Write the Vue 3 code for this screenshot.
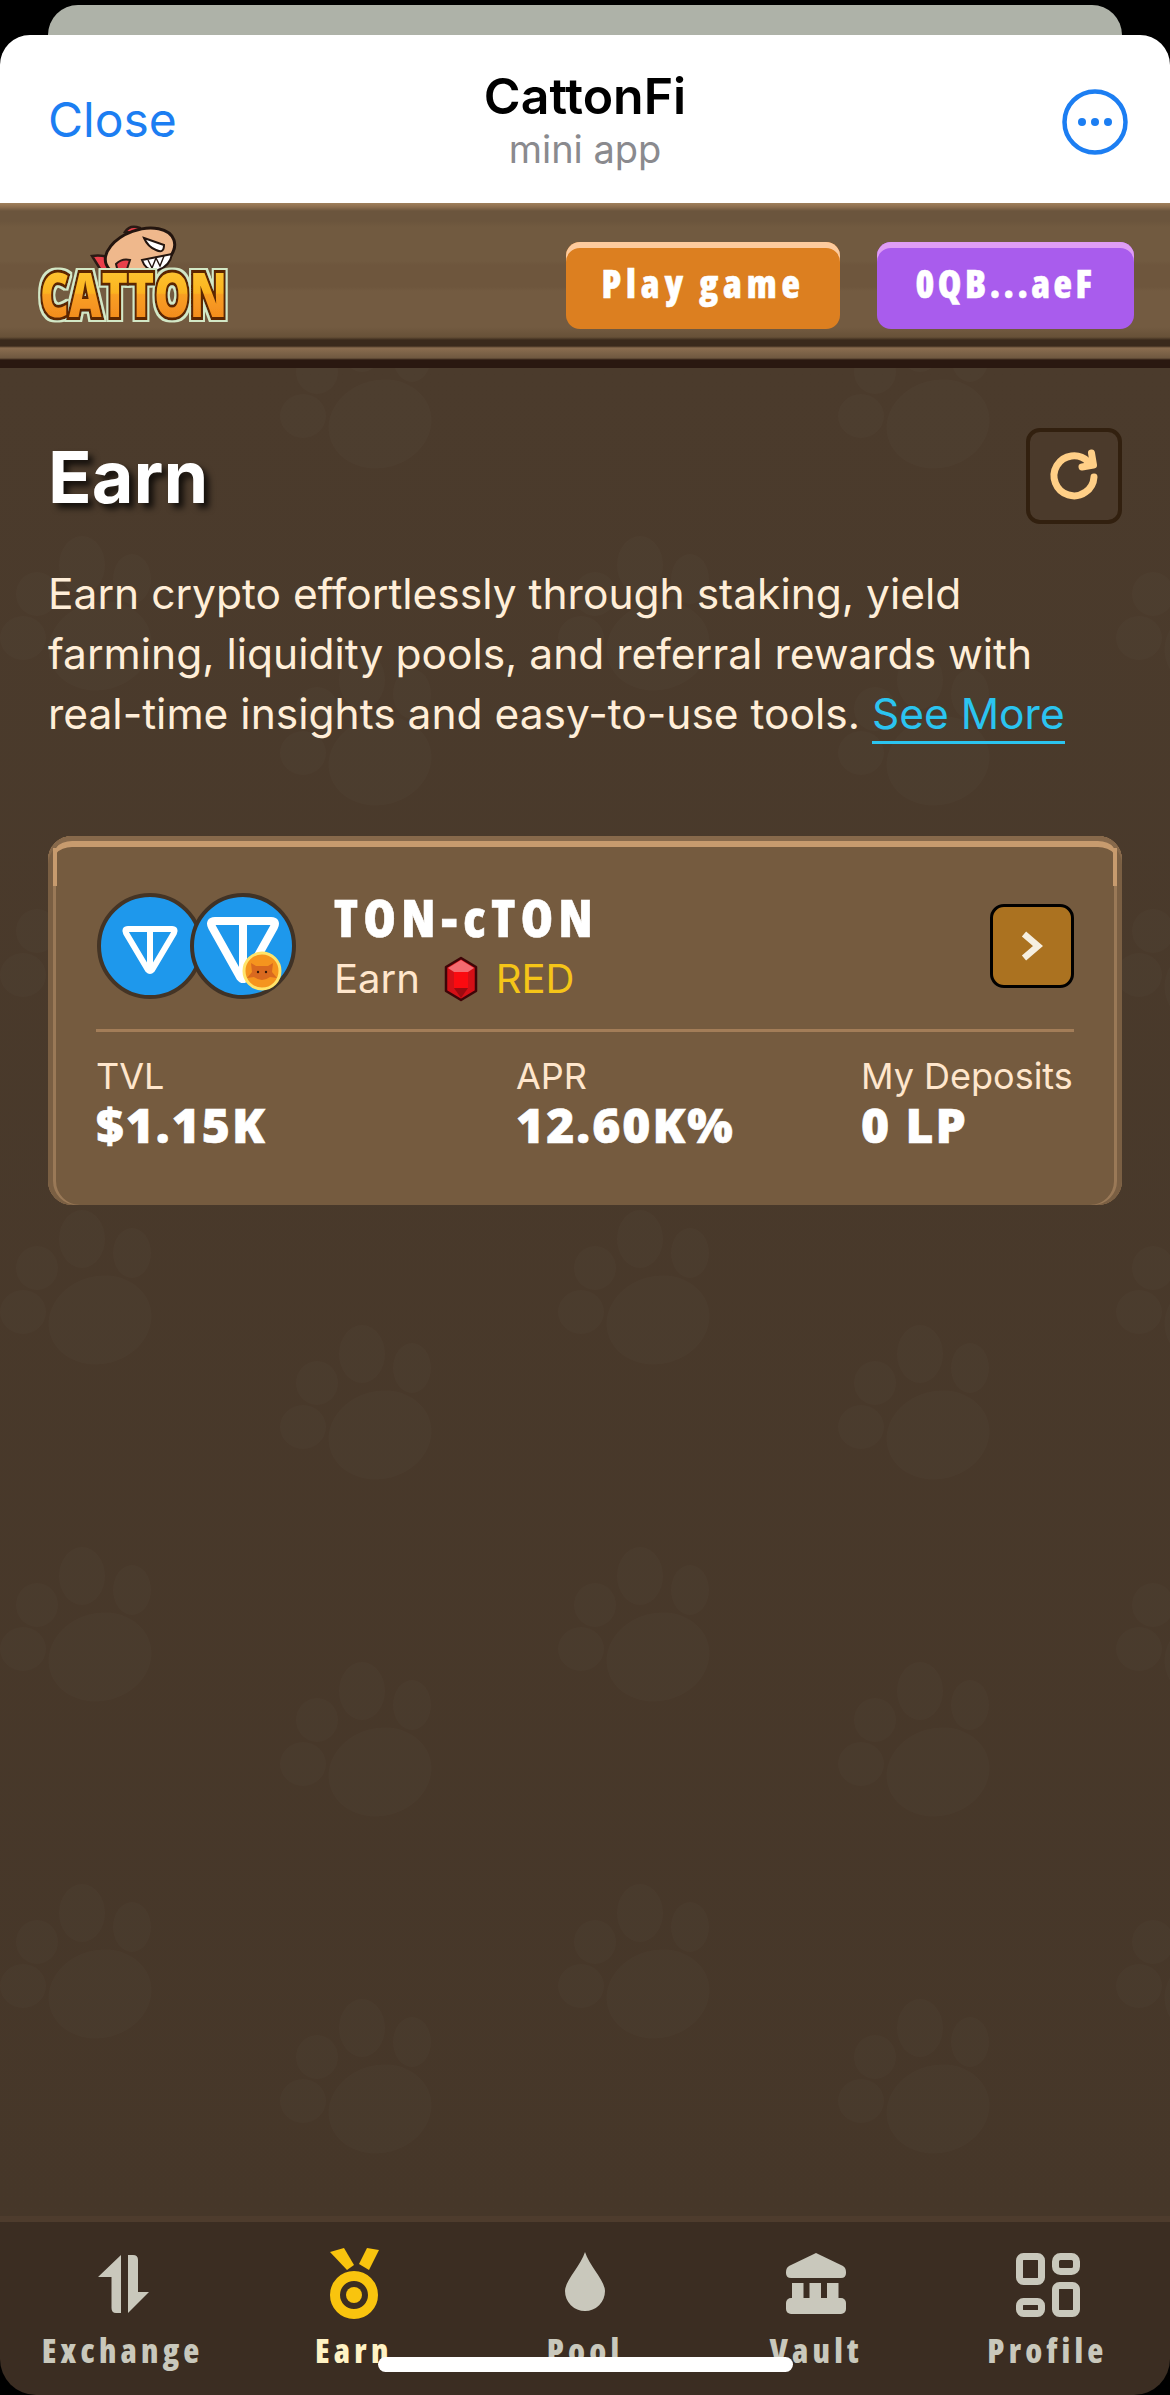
<script setup>
const stats = [
  { label: 'TVL', value: '$1.15K' },
  { label: 'APR', value: '12.60K%' },
  { label: 'My Deposits', value: '0 LP' }
]
const tabs = [
  { key: 'exchange', label: 'Exchange' },
  { key: 'earn', label: 'Earn', active: true },
  { key: 'pool', label: 'Pool' },
  { key: 'vault', label: 'Vault' },
  { key: 'profile', label: 'Profile' }
]
</script>

<template>
  <div class="screen">
    <div class="back-sheet"></div>
    <div class="sheet">
      <header class="tg-bar">
        <span class="close">Close</span>
        <div class="tg-title">
          <div class="tg-name">CattonFi</div>
          <div class="tg-sub">mini app</div>
        </div>
        <svg class="tg-more" width="66" height="66" viewBox="0 0 66 66">
          <circle cx="33" cy="33" r="30.5" fill="none" stroke="#1c7ef2" stroke-width="4.5" />
          <circle cx="20" cy="33" r="4" fill="#1c7ef2" />
          <circle cx="33" cy="33" r="4" fill="#1c7ef2" />
          <circle cx="46" cy="33" r="4" fill="#1c7ef2" />
        </svg>
      </header>

      <div class="wood">
        <svg class="logo" width="206" height="110" viewBox="0 0 206 110">
          <defs>
            <linearGradient id="logoFill" x1="0" y1="0" x2="0" y2="1">
              <stop offset="0" stop-color="#ffd23f" />
              <stop offset=".5" stop-color="#fbb31f" />
              <stop offset=".52" stop-color="#f99f22" />
              <stop offset="1" stop-color="#ee7f1c" />
            </linearGradient>
            <filter id="logoEdge" x="-5%" y="-10%" width="110%" height="120%">
              <feMorphology in="SourceAlpha" operator="dilate" radius="1.6" result="fat" />
              <feFlood flood-color="#d3e8c6" />
              <feComposite in2="fat" operator="in" result="edge" />
              <feMerge>
                <feMergeNode in="edge" />
                <feMergeNode in="SourceGraphic" />
              </feMerge>
            </filter>
          </defs>
          <path d="M72 52 L62 36 Q74 34 84 40 L86 54 Z" fill="#ea3f4a" stroke="#2a1a14" stroke-width="2.5" />
          <path d="M95 12 Q100 4 110 8 L114 14 Z" fill="#e8404a" stroke="#2a1a14" stroke-width="2.5" />
          <ellipse cx="110" cy="32" rx="36" ry="22" transform="rotate(-20 110 32)" fill="#efb88c" stroke="#23150f" stroke-width="3" />
          <path d="M86 44 Q92 38 100 40 L96 52 H88 Z" fill="#e8404a" stroke="#2a1a14" stroke-width="2" />
          <path d="M114 18 L134 25 Q134 34 126 30 Q118 27 114 18 Z" fill="#fff" stroke="#23150f" stroke-width="2" />
          <path d="M112 40 L142 34 Q140 46 128 50 Q116 52 112 40 Z" fill="#fff" stroke="#23150f" stroke-width="2" />
          <path d="M118 40 L122 48 L126 38 L130 46 L134 36" fill="none" stroke="#23150f" stroke-width="1.4" />
          <text class="logo-text" x="10" y="97" textLength="187" lengthAdjust="spacingAndGlyphs" filter="url(#logoEdge)">CATTON</text>
        </svg>
        <button class="wood-btn orange">Play game</button>
        <button class="wood-btn purple">0QB...aeF</button>
      </div>

      <main class="content">
        <svg class="paws" width="100%" height="100%">
          <defs>
            <g id="paw">
              <ellipse cx="100" cy="110" rx="52" ry="44" transform="rotate(-15 100 110)" />
              <ellipse cx="37" cy="58" rx="21" ry="22" />
              <ellipse cx="82" cy="29" rx="23" ry="29" />
              <ellipse cx="132" cy="43" rx="19" ry="25" />
              <ellipse cx="23" cy="102" rx="23" ry="22" />
            </g>
            <pattern id="pawTile" width="558" height="337" patternUnits="userSpaceOnUse" patternTransform="translate(0 168)">
              <use href="#paw" />
              <use href="#paw" x="280" y="115" />
            </pattern>
          </defs>
          <rect width="100%" height="100%" fill="url(#pawTile)" />
        </svg>

        <div class="title-row">
          <h1>Earn</h1>
          <button class="refresh">
            <svg width="60" height="60" viewBox="0 0 60 60" fill="none" stroke="#ffcf87" stroke-width="7" stroke-linecap="round" stroke-linejoin="round">
              <path d="M50 31 A20 20 0 1 1 44 15.5" />
              <path d="M47.5 7 L49.5 19 L38 21" />
            </svg>
          </button>
        </div>

        <p class="intro">
          Earn crypto effortlessly through staking, yield farming, liquidity pools, and referral rewards with real-time insights and easy-to-use tools.
          <a class="more">See More</a>
        </p>

        <section class="card">
          <div class="card-top">
            <svg class="coins" width="200" height="110" viewBox="0 0 200 110">
              <circle cx="54" cy="55" r="51" fill="#1e98ec" stroke="#443425" stroke-width="4" />
              <path d="M32 38 H76 Q80 38 78 42 L56 79 Q54 81 52 79 L30 42 Q28 38 32 38 Z M54 38 V79" fill="none" stroke="#fff" stroke-width="6" stroke-linejoin="round" />
              <circle cx="147" cy="55" r="51" fill="#1e98ec" stroke="#3f3226" stroke-width="4" />
              <path d="M119 30 H175 Q181 30 178 36 L150 86 Q147 90 144 86 L116 36 Q113 30 119 30 Z M147 30 V88" fill="none" stroke="#fff" stroke-width="8" stroke-linejoin="round" />
              <circle cx="166" cy="80" r="18" fill="#f5941e" stroke="#ffe46a" stroke-width="3" />
              <path d="M155 72 L160 75 H172 L177 72 L176 81 L181 87 L174 86 Q166 92 158 86 L151 87 L156 81 Z" fill="#d9691f" />
              <circle cx="162" cy="81" r="1.2" fill="#3a1a08" />
              <circle cx="170" cy="81" r="1.2" fill="#3a1a08" />
            </svg>
            <div class="pool-info">
              <div class="pool-name">TON-cTON</div>
              <div class="pool-sub">
                <span>Earn</span>
                <svg width="34" height="46" viewBox="0 0 34 46">
                  <path d="M17 2 L32 11 V35 L17 44 L2 35 V11 Z" fill="#d40f16" stroke="#3e0508" stroke-width="2.5" stroke-linejoin="round" />
                  <path d="M17 4 L30 12 L24 16 H10 L4 12 Z" fill="#f46a70" />
                  <path d="M10 16 H24 V32 H10 Z" fill="#fb0a10" />
                  <path d="M10 32 H24 L17 42 Z" fill="#9b0a10" />
                </svg>
                <span class="red">RED</span>
              </div>
            </div>
            <button class="go">
              <svg width="26" height="34" viewBox="0 0 26 34" fill="none" stroke="#f6efe0" stroke-width="6.5" stroke-linejoin="miter">
                <path d="M5 5 L19 17 L5 29" />
              </svg>
            </button>
          </div>
          <div class="stats">
            <div v-for="s in stats" :key="s.label">
              <div class="stat-label">{{ s.label }}</div>
              <div class="stat-value">{{ s.value }}</div>
            </div>
          </div>
        </section>
      </main>

      <nav class="tabs">
        <div v-for="t in tabs" :key="t.key" class="tab" :class="{ active: t.active }">
          <svg width="80" height="80" viewBox="0 0 80 80" fill="currentColor">
            <template v-if="t.key === 'exchange'">
              <path d="M38 10 L15 32 H28.5 V63 Q28.5 68 33 68 H38 Z" />
              <path d="M45 10 H50 Q55 10 55 15 V47 H66 L45 68 Z" />
            </template>
            <template v-else-if="t.key === 'earn'">
              <path d="M16 7 L30 3 L40 20 L33 25 Z" />
              <path d="M53 3 L65 5 L55 25 L45 19 Z" />
              <circle cx="40" cy="50" r="19" fill="none" stroke="currentColor" stroke-width="10" />
              <circle cx="40" cy="50" r="8" />
            </template>
            <path v-else-if="t.key === 'pool'" d="M40 7 C44 20 60 36 60 46 A20 20 0 0 1 20 46 C20 36 36 20 40 7 Z" />
            <template v-else-if="t.key === 'vault'">
              <path d="M40 8 L67 21 Q70 23 70 27 V28 Q70 33 65 33 H15 Q10 33 10 28 V27 Q10 23 13 21 Z" />
              <rect x="16" y="38" width="11.5" height="16" />
              <rect x="33.5" y="38" width="11.5" height="16" />
              <rect x="51" y="38" width="11.5" height="16" />
              <rect x="10" y="53" width="60" height="16" rx="5" />
            </template>
            <g v-else fill="none" stroke="currentColor" stroke-width="7">
              <rect x="12.5" y="11.5" width="22" height="25" rx="4" />
              <rect x="48.5" y="11.5" width="21" height="15" rx="5" />
              <rect x="12.5" y="56.5" width="22" height="12" rx="4" />
              <rect x="48.5" y="40.5" width="21" height="28" rx="4" />
            </g>
          </svg>
          <span class="tab-label">{{ t.label }}</span>
        </div>
        <div class="home-bar"></div>
      </nav>
    </div>
  </div>
</template>

<style scoped>
.screen {
  height: 2395px;
  background: #000;
  padding-top: 5px;
  box-sizing: border-box;
  display: flex;
  flex-direction: column;
  overflow: hidden;
  font-family: Inter, "Liberation Sans", sans-serif;
}
.back-sheet {
  height: 30px;
  margin: 0 48px;
  flex: none;
  background: #aeb2a8;
  border-radius: 30px 30px 0 0;
}
.sheet {
  flex: 1;
  display: flex;
  flex-direction: column;
  border-radius: 30px 30px 36px 36px;
  overflow: hidden;
  min-height: 0;
}

/* telegram top bar */
.tg-bar {
  height: 168px;
  flex: none;
  box-sizing: border-box;
  background: #fff;
  position: relative;
  display: flex;
  align-items: center;
  justify-content: space-between;
  padding: 0 42px 0 48px;
}
.close { color: #1c7ef2; font-size: 48px; }
.tg-title {
  position: absolute;
  left: 0;
  right: 0;
  top: 32px;
  text-align: center;
}
.tg-name { font-size: 50px; font-weight: 600; line-height: 58px; color: #000; }
.tg-sub { font-size: 38px; line-height: 48px; color: #8a8a8e; }
.tg-more { margin-top: 6px; }

/* wood header */
.wood {
  height: 165px;
  flex: none;
  box-sizing: border-box;
  display: flex;
  align-items: flex-start;
  padding: 17px 36px 0 30px;
  background: linear-gradient(180deg,
    #a0805c 0, #8b6d4e 4px, #6b553d 8px, #6b553d 18px, #715a40 24px, #715a40 58px,
    #6e563d 62px, #6e563d 84px, #735b41 88px, #735b41 124px, #675138 134px,
    #3a2a1c 137px, #3a2a1c 143px, #8a6d4f 145px, #6f5840 155px, #2a1810 157px, #2a1810 165px);
}
.logo { flex: none; }
.logo-text {
  font-family: "Open Sans", sans-serif;
  font-weight: 800;
  font-size: 62px;
  fill: url(#logoFill);
  stroke: #5b2604;
  stroke-width: 6px;
  paint-order: stroke;
}
.wood-btn {
  margin-top: 22px;
  height: 87px;
  border: 0;
  border-radius: 14px;
  color: #fff;
  font-family: "Open Sans", sans-serif;
  font-stretch: 85%;
  font-weight: 800;
  font-size: 38px;
  -webkit-text-stroke: .5px #fff;
  padding: 0 0 6px;
}
.orange {
  margin-left: auto;
  width: 274px;
  letter-spacing: 4.8px;
  background: #dc7f20;
  box-shadow: inset 0 6px 0 #fdcb9e;
}
.purple {
  margin-left: 37px;
  width: 257px;
  letter-spacing: 3.5px;
  background: #a95ced;
  box-shadow: inset 0 6px 0 #df9df5;
}

/* page body */
.content {
  flex: 1;
  position: relative;
  padding: 60px 48px 0;
  background: linear-gradient(180deg, #4b3b2c, #463729);
  min-height: 0;
}
.paws {
  position: absolute;
  inset: 0;
  fill: #fff;
  opacity: .01;
}
.title-row, .intro, .card { position: relative; }
.title-row {
  display: flex;
  align-items: center;
  justify-content: space-between;
}
h1 {
  margin: 0;
  font-size: 72px;
  font-weight: 700;
  color: #fff;
  text-shadow: 5px 5px 6px rgba(0, 0, 0, .75);
}
.refresh {
  width: 96px;
  height: 96px;
  box-sizing: border-box;
  border: 4px solid #32200f;
  border-radius: 14px;
  background: #4b3a2b;
  padding: 0;
  display: flex;
  align-items: center;
  justify-content: center;
}
.intro {
  margin: 40px 0 0;
  max-width: 1030px;
  font-size: 42.5px;
  line-height: 60px;
  color: #ffeed8;
}
.more {
  color: #2bc4f0;
  border-bottom: 3px solid #2bc4f0;
  padding-bottom: 2px;
}

.card {
  margin-top: 92px;
  height: 369px;
  box-sizing: border-box;
  padding: 57px 48px 0;
  border-radius: 24px;
  background: #755b3f;
  box-shadow: inset 0 5px 0 #87694b, inset 5px 0 0 #7a5f43, inset -5px 0 0 #7a5f43,
    inset 0 11px 0 #c79b6e, inset 8px 0 0 #9a7957, inset -8px 0 0 #9a7957;
}
.card::before, .card::after {
  content: "";
  position: absolute;
  top: 12px;
  width: 4px;
  height: 38px;
  background: #c79b6e;
}
.card::before { left: 5px; }
.card::after { right: 5px; }
.card-top {
  display: flex;
  align-items: center;
  height: 106px;
}
.coins { flex: none; margin: -2px 38px -2px 0; }
.pool-name {
  font-family: "Open Sans", sans-serif;
  font-stretch: 85%;
  font-weight: 800;
  font-size: 52px;
  line-height: 56px;
  letter-spacing: 5.5px;
  -webkit-text-stroke: .6px #fff;
  color: #fff;
}
.pool-sub {
  margin-top: 9px;
  display: flex;
  align-items: center;
  gap: 24px;
  font-size: 40px;
  line-height: 50px;
  color: #ffe6cc;
}
.pool-sub .red { color: #f5c518; margin-left: -6px; }
.go {
  margin-left: auto;
  width: 84px;
  height: 84px;
  box-sizing: border-box;
  border: 3px solid #000;
  border-radius: 14px;
  background: #ab7220;
  padding: 0;
  display: flex;
  align-items: center;
  justify-content: center;
}
.stats {
  margin-top: 30px;
  padding-top: 22px;
  border-top: 3px solid #a37d58;
  display: grid;
  grid-template-columns: 420px 345px auto;
}
.stat-label { font-size: 36px; line-height: 44px; color: #ffe6cc; }
.stat-value {
  font-family: "Open Sans", sans-serif;
  font-stretch: 90%;
  font-weight: 800;
  font-size: 48px;
  line-height: 54px;
  letter-spacing: 2px;
  -webkit-text-stroke: .6px #fff;
  color: #fff;
}

/* bottom tabs */
.tabs {
  height: 179px;
  flex: none;
  box-sizing: border-box;
  position: relative;
  padding: 23px 7px 0;
  display: grid;
  grid-template-columns: repeat(5, 1fr);
  background: #3b2d22;
  border-top: 6px solid #4e3c2d;
}
.tab {
  display: flex;
  flex-direction: column;
  align-items: center;
  color: #c9c8bc;
}
.tab.active { color: #f9c40e; }
.tab-label {
  margin-top: 6px;
  font-family: "Open Sans", sans-serif;
  font-stretch: 85%;
  font-weight: 800;
  font-size: 33px;
  line-height: 40px;
  letter-spacing: 4.2px;
}
.tab.active .tab-label { color: #fff2c4; }
.home-bar {
  position: absolute;
  left: 378px;
  top: 135px;
  width: 415px;
  height: 15px;
  border-radius: 8px;
  background: #fff;
}
</style>

<style>
html, body { background: #000; }
</style>
